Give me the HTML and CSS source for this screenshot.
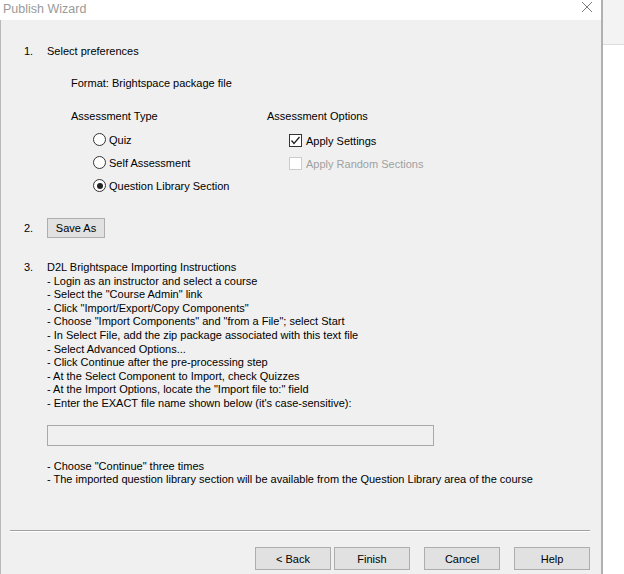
FILE: index.html
```html
<!DOCTYPE html>
<html>
<head>
<meta charset="utf-8">
<link rel="stylesheet" href="styles.css">
</head>
<body>
<div class="screen">
  <div class="window">
    <div class="titlebar">
      <span class="title">Publish Wizard</span>
      <svg class="close" width="12" height="12" viewBox="0 0 12 12"><path d="M1 1 L11 11 M11 1 L1 11" stroke="#7a7a7a" stroke-width="1" fill="none"/></svg>
    </div>
    <div class="body">
      <div class="content">
        <div class="step step1">
          <div class="num">1.</div>
          <div class="stepmain">
            <div class="line">Select preferences</div>
            <div class="format">Format: Brightspace package file</div>
            <div class="options">
              <div class="group group-type">
                <div class="grouptitle">Assessment Type</div>
                <div class="rows">
                  <div class="opt"><span class="radio"></span><span>Quiz</span></div>
                  <div class="opt"><span class="radio"></span><span>Self Assessment</span></div>
                  <div class="opt"><span class="radio checked"></span><span>Question Library Section</span></div>
                </div>
              </div>
              <div class="group group-opts">
                <div class="grouptitle">Assessment Options</div>
                <div class="rows">
                  <div class="opt"><span class="check"><svg width="11" height="11" viewBox="0 0 11 11"><path d="M1.5 5.5 L4 8.5 L9.5 2" stroke="#222" stroke-width="1.3" fill="none"/></svg></span><span>Apply Settings</span></div>
                  <div class="opt disabled"><span class="check off"></span><span>Apply Random Sections</span></div>
                </div>
              </div>
            </div>
          </div>
        </div>

        <div class="step step2">
          <div class="num">2.</div>
          <div class="stepmain"><button class="btn saveas">Save As</button></div>
        </div>

        <div class="step step3">
          <div class="num">3.</div>
          <div class="stepmain">
            <div class="instr">
              <div>D2L Brightspace Importing Instructions</div>
              <div>- Login as an instructor and select a course</div>
              <div>- Select the "Course Admin" link</div>
              <div>- Click "Import/Export/Copy Components"</div>
              <div>- Choose "Import Components" and "from a File"; select Start</div>
              <div>- In Select File, add the zip package associated with this text file</div>
              <div>- Select Advanced Options...</div>
              <div>- Click Continue after the pre-processing step</div>
              <div>- At the Select Component to Import, check Quizzes</div>
              <div>- At the Import Options, locate the "Import file to:" field</div>
              <div>- Enter the EXACT file name shown below (it's case-sensitive):</div>
            </div>
            <div class="filebox"></div>
            <div class="instr after">
              <div>- Choose "Continue" three times</div>
              <div>- The imported question library section will be available from the Question Library area of the course</div>
            </div>
          </div>
        </div>
      </div>

      <div class="footer">
        <div class="sep"></div>
        <div class="buttons">
          <div class="pair">
            <button class="btn wide">&lt; Back</button>
            <button class="btn wide">Finish</button>
          </div>
          <button class="btn wide">Cancel</button>
          <button class="btn wide">Help</button>
        </div>
      </div>
    </div>
  </div>
  <div class="aside"><div class="aside-top"></div></div>
</div>
</body>
</html>
```

FILE: styles.css
```css
html, body {
  margin: 0;
  padding: 0;
  background: #ffffff;
}
body {
  font-family: "Liberation Sans", Arial, sans-serif;
  font-size: 11px;
  color: #000;
  width: 624px;
  height: 574px;
  overflow: hidden;
}
.screen {
  display: flex;
  height: 574px;
}
.window {
  width: 601px;
  display: flex;
  flex-direction: column;
  border-right: 2px solid #b0b0b0;
}
.titlebar {
  height: 20px;
  background: #ffffff;
  display: flex;
  align-items: center;
  justify-content: space-between;
  padding: 0 8px 0 3px;
}
.title {
  font-size: 12.5px;
  color: #9a9a9a;
  margin-top: -3px;
}
.close {
  margin-top: -6px;
}
.body {
  flex: 1;
  background: #f0f0f0;
  border-left: 1px solid #b9b9b9;
  display: flex;
  flex-direction: column;
}
.content {
  flex: 1;
  padding: 24px 0 0 23px;
}
.step {
  display: grid;
  grid-template-columns: 23px 1fr;
}
.num {
  line-height: 14px;
}
.line, .format, .grouptitle {
  line-height: 14px;
}
.format {
  margin: 18px 0 0 24px;
}
.options {
  display: flex;
  margin: 19px 0 0 24px;
}
.group-type {
  width: 196px;
}
.rows {
  padding: 5px 0 0 22px;
}
.opt {
  height: 23px;
  display: flex;
  align-items: center;
}
.group-opts .rows {
  padding-top: 6px;
}
.radio {
  width: 11px;
  height: 11px;
  border: 1px solid #333;
  border-radius: 50%;
  background: #fff;
  margin-right: 3px;
  display: flex;
  align-items: center;
  justify-content: center;
  flex: none;
}
.radio.checked::after {
  content: "";
  width: 6px;
  height: 6px;
  border-radius: 50%;
  background: #222;
}
.check {
  width: 11px;
  height: 11px;
  border: 1px solid #333;
  background: #fff;
  margin-right: 4px;
  display: flex;
  align-items: center;
  justify-content: center;
  flex: none;
}
.check.off {
  border-color: #cccccc;
  background: #ffffff;
}
.opt.disabled {
  color: #a0a0a0;
}
.step2 {
  margin-top: 21px;
  align-items: center;
}
.btn {
  font-family: "Liberation Sans", Arial, sans-serif;
  font-size: 11px;
  color: #000;
  background: #e1e1e1;
  border: 1px solid #adadad;
  padding: 0;
  margin: 0;
  height: 20px;
}
.saveas {
  width: 58px;
}
.step3 {
  margin-top: 23px;
}
.step3 .num {
  line-height: 13.6px;
}
.instr {
  line-height: 13.6px;
}
.filebox {
  width: 385px;
  height: 19px;
  border: 1px solid #a9a9a9;
  background: #f0f0f0;
  margin: 14px 0 14px 0;
}
.footer {
  padding: 0 11px 4px 9px;
}
.sep {
  height: 1px;
  background: #a0a0a0;
  border-bottom: 1px solid #ffffff;
  margin-bottom: 15px;
}
.buttons {
  display: flex;
  justify-content: flex-end;
  gap: 14px;
}
.pair {
  display: flex;
  gap: 3px;
}
.btn.wide {
  width: 76px;
  height: 23px;
}
.aside {
  flex: 1;
  background: #ffffff;
}
.aside-top {
  height: 44px;
  background: #f3f3f3;
  border-bottom: 1px solid #dcdcdc;
}
```
